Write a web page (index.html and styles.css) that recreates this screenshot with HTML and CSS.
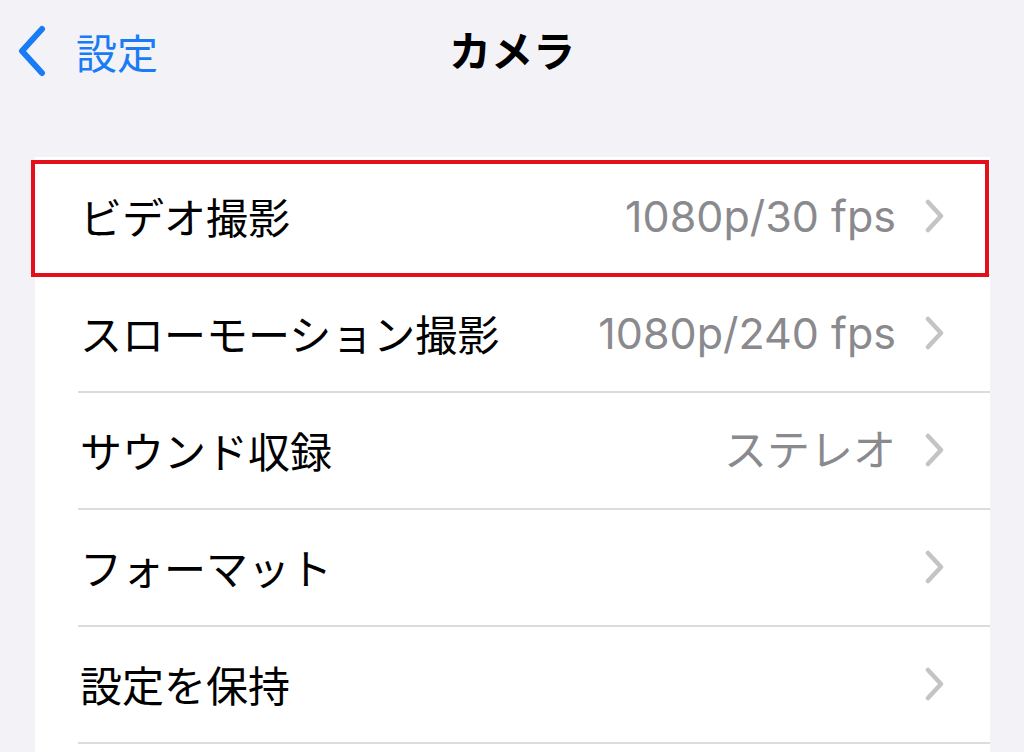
FILE: index.html
```html
<!DOCTYPE html>
<html lang="ja">
<head>
<meta charset="utf-8">
<link rel="stylesheet" href="styles.css">
</head>
<body>
<div class="screen">
  <header class="nav">
    <div class="back">
      <svg class="back-icon" width="30" height="52" viewBox="0 0 30 52"><path d="M25 4 L5 26 L25 48" fill="none" stroke="#1a7cf4" stroke-width="6" stroke-linecap="round" stroke-linejoin="round"/></svg>
      <span class="back-label">設定</span>
    </div>
    <div class="title">カメラ</div>
  </header>
  <div class="card">
    <div class="row highlighted">
      <span class="label">ビデオ撮影</span>
      <span class="value">1080p/30 fps</span>
      <svg class="chev" width="22" height="34" viewBox="0 0 22 34"><path d="M4 3 L17 17 L4 31" fill="none" stroke="#c4c4c7" stroke-width="4.5" stroke-linecap="round" stroke-linejoin="round"/></svg>
    </div>
    <div class="row">
      <span class="label">スローモーション撮影</span>
      <span class="value">1080p/240 fps</span>
      <svg class="chev" width="22" height="34" viewBox="0 0 22 34"><path d="M4 3 L17 17 L4 31" fill="none" stroke="#c4c4c7" stroke-width="4.5" stroke-linecap="round" stroke-linejoin="round"/></svg>
    </div>
    <div class="row">
      <span class="label">サウンド収録</span>
      <span class="value">ステレオ</span>
      <svg class="chev" width="22" height="34" viewBox="0 0 22 34"><path d="M4 3 L17 17 L4 31" fill="none" stroke="#c4c4c7" stroke-width="4.5" stroke-linecap="round" stroke-linejoin="round"/></svg>
    </div>
    <div class="row">
      <span class="label">フォーマット</span>
      <span class="value"></span>
      <svg class="chev" width="22" height="34" viewBox="0 0 22 34"><path d="M4 3 L17 17 L4 31" fill="none" stroke="#c4c4c7" stroke-width="4.5" stroke-linecap="round" stroke-linejoin="round"/></svg>
    </div>
    <div class="row">
      <span class="label">設定を保持</span>
      <span class="value"></span>
      <svg class="chev" width="22" height="34" viewBox="0 0 22 34"><path d="M4 3 L17 17 L4 31" fill="none" stroke="#c4c4c7" stroke-width="4.5" stroke-linecap="round" stroke-linejoin="round"/></svg>
    </div>
    <div class="row">
      <span class="label">&nbsp;</span>
      <span class="value"></span>
    </div>
  </div>
</div>
</body>
</html>
```
FILE: styles.css
```css
* { box-sizing: border-box; }
html, body {
  margin: 0;
  padding: 0;
  background: #f2f2f7;
  width: 1024px;
  height: 752px;
  overflow: hidden;
}
.screen {
  font-family: Inter, "Noto Sans CJK JP", sans-serif;
  color: #000;
}
.nav {
  position: relative;
  height: 157px;
}
.back {
  display: flex;
  align-items: center;
  gap: 29px;
  padding: 25px 0 0 17px;
  color: #1a7cf4;
}
.back-icon { display: block; }
.back-label {
  font-family: "Noto Sans CJK JP", sans-serif;
  font-size: 41px;
  line-height: 52px;
}
.title {
  position: absolute;
  left: 0;
  right: 0;
  top: 21px;
  text-align: center;
  font-family: "Noto Sans CJK JP", sans-serif;
  font-weight: 700;
  font-size: 42px;
  line-height: 56px;
}
.card {
  margin-left: 35px;
  width: 955px;
  background: #fff;
}
.row {
  position: relative;
  display: flex;
  align-items: center;
  height: 117px;
  padding: 0 44px 0 45px;
}
.row + .row::before {
  content: "";
  position: absolute;
  top: 0;
  left: 43px;
  right: 0;
  height: 2px;
  background: #dcdcdf;
}
.row.highlighted::after {
  content: "";
  position: absolute;
  top: 3px;
  bottom: -3px;
  left: -4px;
  right: 1px;
  border: 4px solid #e3101b;
  z-index: 2;
}
.label {
  flex: 1;
  font-family: "Noto Sans CJK JP", sans-serif;
  font-size: 42px;
  line-height: 56px;
  white-space: nowrap;
}
.value {
  font-size: 43px;
  color: #8a8a8e;
  line-height: 56px;
  margin-right: 28px;
  white-space: nowrap;
}
.chev { display: block; flex: none; }
```
